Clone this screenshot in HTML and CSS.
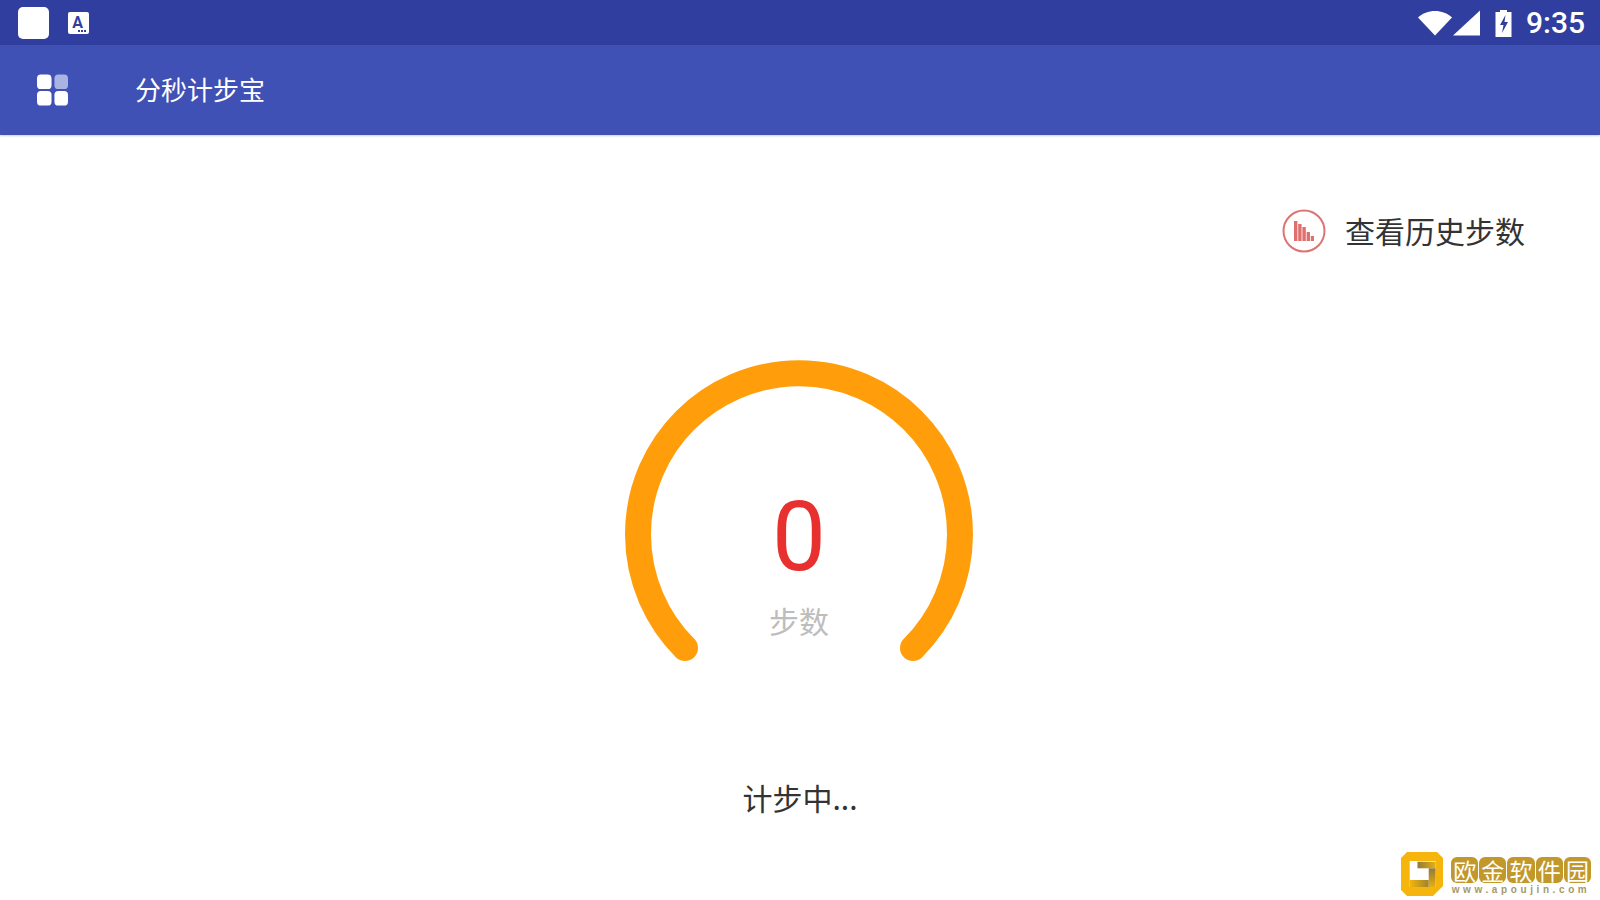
FILE: index.html
```html
<!DOCTYPE html>
<html>

<head>
    <meta charset="UTF-8" />
    <title>分秒计步宝</title>
    <link rel="stylesheet" href="styles.css">
</head>

<body>
    <div class="status-bar">
        <div class="status-left">
            <span class="white-square"></span>
            <span class="a-icon">A<svg class="a-dots" width="8" height="2" viewBox="0 0 8 2"><path d="M0 0h2v2H0zM3 0h2v2H3zM6 0h2v2H6z" fill="#303f9f" /></svg></span>
        </div>
        <div class="status-right">
            <svg class="wifi" width="34" height="26" viewBox="0 0 34 26"><path d="M0 7.500C4.500 3.300 10.500 1 17 1s12.500 2.300 17 6.500L17 25.500z" fill="#fff" /></svg>
            <svg class="signal" width="27" height="26" viewBox="0 0 27 26"><path d="M27 .5v25H0z" fill="#fff" /></svg>
            <svg class="battery" width="18" height="28" viewBox="0 0 18 28"><path d="M5 3V1h7v2h4.500v25H.5V3z" fill="#fff" /><path d="M10.500 6 5 16h3.500l-1.500 8 6-11H9.500z" fill="#303f9f" /></svg>
            <span class="clock">9:35</span>
        </div>
    </div>
    <div class="app-bar">
        <svg class="menu-icon" width="31" height="32" viewBox="0 0 32 32">
            <rect x="0" y="0" width="15" height="15" rx="4" fill="#fff" />
            <rect x="18" y="0" width="14" height="15" rx="4" fill="#a9b4e3" />
            <rect x="0" y="17" width="15" height="15" rx="4" fill="#fff" />
            <rect x="18" y="17" width="14" height="15" rx="4" fill="#fff" />
        </svg>
        <span class="app-title">分秒计步宝</span>
    </div>
    <div class="content">
        <div class="history-row">
            <svg class="history-icon" width="44" height="44" viewBox="0 0 44 44">
                <circle cx="22" cy="22" r="20.500" fill="none" stroke="#dd7473" stroke-width="2" />
                <path d="M12 12h3.400v20H12zM16.200 15h3.400v17h-3.400zM20.400 18h3.400v14h-3.400zM24.600 23h3.400v9h-3.400zM28.800 27h3.200v5h-3.200z" fill="#e0706e" />
            </svg>
            <span class="history-text">查看历史步数</span>
        </div>
        <div class="gauge">
            <svg class="gauge-arc" width="348" height="302" viewBox="0 0 348 302">
                <path d="M60 288A161 161 0 1 1 288 288" fill="none" stroke="#ff9e0a" stroke-width="26" stroke-linecap="round" />
            </svg>
            <div class="step-count">0</div>
            <div class="step-label">步数</div>
        </div>
        <div class="status-text">计步中...</div>
    </div>
    <div class="watermark">
        <svg class="wm-logo" width="42" height="44" viewBox="0 0 42 44">
            <defs>
                <linearGradient id="bar-top" x1="0" y1="0" x2="1" y2="0">
                    <stop offset="0" stop-color="#8f7a3c" />
                    <stop offset="1" stop-color="#e6ae10" />
                </linearGradient>
                <linearGradient id="bar-right" x1="0" y1="0" x2="0" y2="1">
                    <stop offset="0" stop-color="#8f7a3c" />
                    <stop offset="1" stop-color="#e6ae10" />
                </linearGradient>
                <linearGradient id="bar-bottom" x1="0" y1="0" x2="1" y2="0">
                    <stop offset="0" stop-color="#f5b50d" />
                    <stop offset="1" stop-color="#a08428" />
                </linearGradient>
            </defs>
            <path d="M6 0h30l6 6v28L32 44H6l-6-6V6z" fill="#f5b50d" />
            <path d="M8.700 9h25.800v26H8.700z" fill="#fff" />
            <path d="M16.500 9.700h18v6.600h-18z" fill="url(#bar-top)" />
            <path d="M27.700 16.300h6.800V35h-6.800z" fill="url(#bar-right)" />
            <path d="M8.700 28h19v7h-19z" fill="url(#bar-bottom)" />
        </svg>
        <div class="wm-text">
            <div class="wm-tiles">
                <span class="wm-tile">欧</span>
                <span class="wm-tile">金</span>
                <span class="wm-tile">软</span>
                <span class="wm-tile">件</span>
                <span class="wm-tile">园</span>
            </div>
            <div class="wm-url">www.apoujin.com</div>
        </div>
    </div>
</body>

</html>
```

FILE: styles.css
```css
html,
body {
    margin: 0;
    padding: 0;
    height: 100%;
}

body {
    position: relative;
    width: 1600px;
    height: 900px;
    overflow: hidden;
    background-color: #fff;
    font-family: "Noto Sans CJK SC", Roboto, sans-serif;
}

.status-bar {
    display: flex;
    align-items: center;
    justify-content: space-between;
    height: 45px;
    padding: 0 15px 0 18px;
    background-color: #303f9f;
}

.status-left {
    display: flex;
    align-items: center;
    gap: 19px;
}

.white-square {
    display: block;
    width: 31px;
    height: 32px;
    background-color: #fff;
    border-radius: 5px;
}

.a-icon {
    position: relative;
    display: block;
    width: 19px;
    height: 22px;
    padding-right: 2px;
    background-color: #fff;
    border-radius: 2px;
    color: #303f9f;
    font-family: Roboto, sans-serif;
    font-size: 16px;
    font-weight: 700;
    line-height: 22px;
    text-align: center;
}

.a-dots {
    position: absolute;
    right: 3px;
    bottom: 2px;
}

.status-right {
    display: flex;
    align-items: center;
}

.wifi {
    margin-right: 1px;
}

.signal {
    margin-right: 15px;
}

.clock {
    margin-left: 13px;
    color: #fff;
    font-family: Roboto, sans-serif;
    font-size: 30px;
    font-weight: 500;
}

.app-bar {
    display: flex;
    align-items: center;
    height: 90px;
    padding-left: 37px;
    background-color: #3f51b5;
    box-shadow: 0 1px 2px rgba(0, 0, 0, 0.2);
}

.app-title {
    margin-left: 67px;
    padding-bottom: 4px;
    color: #fff;
    font-size: 26px;
}

.content {
    display: flex;
    flex-direction: column;
    align-items: center;
}

.history-row {
    display: flex;
    align-items: center;
    align-self: flex-end;
    margin: 74px 75px 0 0;
}

.history-icon {
    margin-right: 19px;
}

.history-text {
    padding-bottom: 2px;
    color: #333;
    font-size: 30px;
    line-height: 42px;
}

.gauge {
    position: relative;
    width: 348px;
    height: 302px;
    margin: 107px 2px 0 0;
}

.gauge-arc {
    display: block;
}

.step-count {
    position: absolute;
    top: 124px;
    left: 0;
    width: 100%;
    color: #e8302e;
    font-family: Roboto, sans-serif;
    font-size: 96px;
    line-height: 106px;
    text-align: center;
}

.step-label {
    position: absolute;
    top: 238px;
    left: 0;
    width: 100%;
    color: #bdbdbd;
    font-size: 30px;
    line-height: 44px;
    text-align: center;
}

.status-text {
    margin-top: 113px;
    color: #333;
    font-size: 30px;
    line-height: 44px;
}

.watermark {
    position: absolute;
    right: 9px;
    bottom: 4px;
    display: flex;
    align-items: flex-start;
    gap: 8px;
}

.wm-text {
    display: flex;
    flex-direction: column;
    gap: 2px;
    padding-top: 5px;
}

.wm-tiles {
    display: flex;
    gap: 1px;
}

.wm-tile {
    display: block;
    width: 27.200px;
    height: 26px;
    background-color: #c2982a;
    border-radius: 6px;
    color: #fff;
    font-size: 23px;
    line-height: 26px;
    text-align: center;
}

.wm-url {
    color: #a89868;
    font-family: "Liberation Sans", sans-serif;
    font-size: 10px;
    font-weight: 700;
    letter-spacing: 3.600px;
    line-height: 10px;
    text-align: center;
    white-space: nowrap;
}
```
